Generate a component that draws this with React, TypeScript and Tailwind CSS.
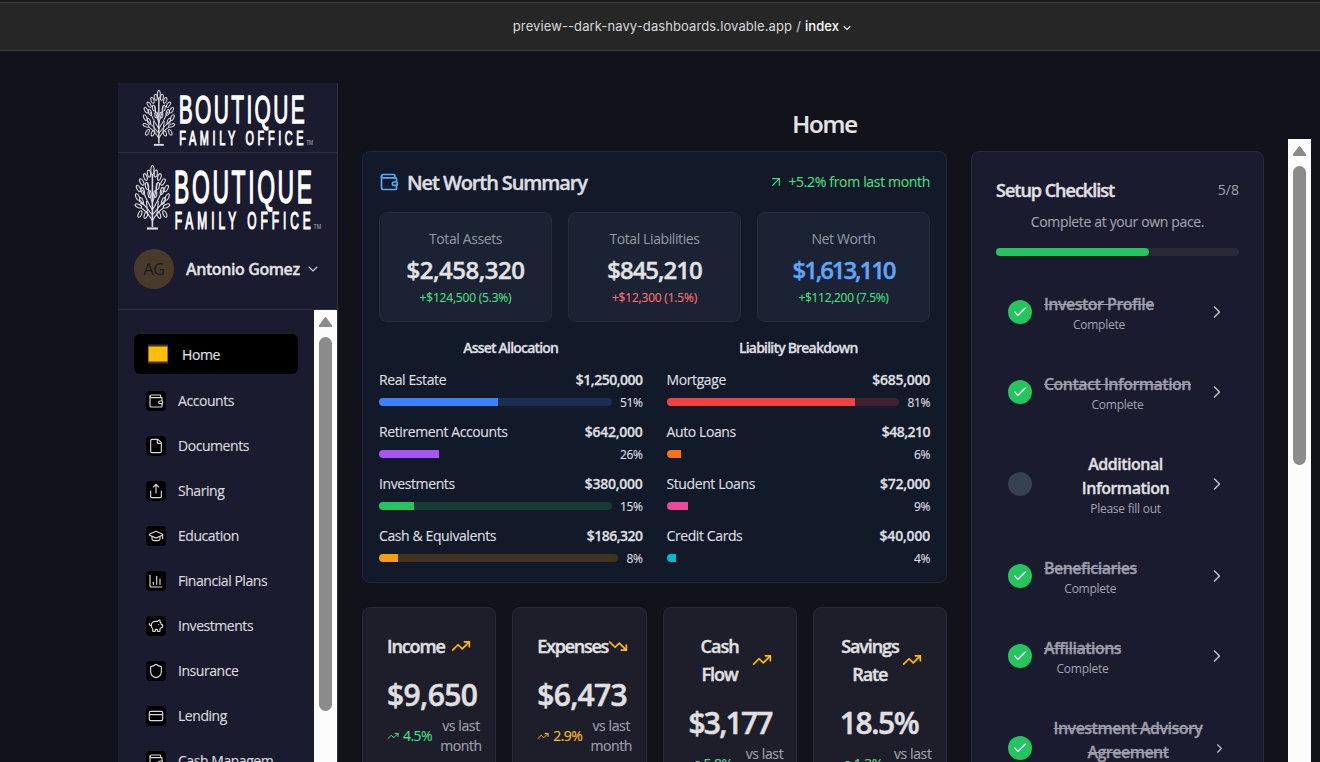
import React from "react";
import {
  Wallet, ArrowUpRight, TrendingUp, TrendingDown, ChevronRight, ChevronDown, Check,
  File, Share, GraduationCap, ChartColumn, PiggyBank, Shield, CreditCard,
} from "lucide-react";

const branches = [
  "M18 56 Q14 48 7 43",
  "M18 50 Q13 43 5 35",
  "M18 45 Q13 37 8 25",
  "M18 38 Q15 30 13 18",
  "M13 46 L12 36",
];
const leaves: [number, number, number][] = [
  [5.5, 49, 25], [11.5, 50, 20], [3.9, 41, -65], [3.1, 32, -25], [7, 36, -20],
  [4.1, 23.5, -30], [8.3, 26, -15], [7.3, 17, -30], [11, 12, -18], [12.6, 21, -10],
  [14.6, 8.5, -8], [15.2, 29, -5],
];

function HalfTree() {
  return (
    <g>
      {branches.map((d) => <path key={d} d={d} />)}
      {leaves.map(([x, y, r]) => (
        <ellipse key={`${x}-${y}`} cx={x} cy={y} rx="1.6" ry="3.5" transform={`rotate(${r} ${x} ${y})`} />
      ))}
    </g>
  );
}

function Logo({ className }: { className: string }) {
  return (
    <svg viewBox="0 0 188 66" preserveAspectRatio="none" overflow="visible" className={className}>
      <g fill="none" stroke="#dadae0" strokeWidth="1.1">
        <g transform="translate(0.5 0)">
          <HalfTree />
          <g transform="translate(36 0) scale(-1 1)"><HalfTree /></g>
          <ellipse cx="18" cy="5" rx="1.6" ry="4.5" />
          <path d="M18 62V9" strokeWidth="1.6" />
          <path d="M12.5 63.5h11" strokeWidth="2.2" />
        </g>
      </g>
      <g fill="#fff" stroke="#fff" fontFamily="Liberation Sans, sans-serif">
        <text transform="translate(40.3 37.7) scale(0.5 1)" fontSize="46" letterSpacing="5.3" strokeWidth="1.5">BOUTIQUE</text>
        <text transform="translate(40.9 63.6) scale(0.5 1)" fontSize="24" letterSpacing="8" strokeWidth="1.2">FAMILY OFFICE</text>
        <text transform="translate(180.5 63.6) scale(0.65 1)" fontSize="8" stroke="none" opacity="0.65">TM</text>
      </g>
    </svg>
  );
}

function ScrollBar({ thumb }: { thumb: string }) {
  return (
    <div className="flex w-[23px] shrink-0 flex-col items-center bg-[#fcfcfc] pt-[6px]">
      <svg viewBox="0 0 15 12" className="h-3 w-[15px] shrink-0">
        <path d="M7.5 2 L13.3 10 H1.7 Z" fill="#8b8b8b" stroke="#8b8b8b" strokeWidth="2" strokeLinejoin="round" />
      </svg>
      <div className={`mt-[9px] w-[13px] shrink-0 rounded-full bg-[#8b8b8b] ${thumb}`} />
    </div>
  );
}

const nav = [
  { label: "Accounts", Icon: Wallet },
  { label: "Documents", Icon: File },
  { label: "Sharing", Icon: Share },
  { label: "Education", Icon: GraduationCap },
  { label: "Financial Plans", Icon: ChartColumn },
  { label: "Investments", Icon: PiggyBank },
  { label: "Insurance", Icon: Shield },
  { label: "Lending", Icon: CreditCard },
  { label: "Cash Managem", Icon: Wallet },
];

function Sidebar() {
  return (
    <aside className="flex w-[220px] shrink-0 flex-col border-r border-[#2e2e42] bg-[#1b1b2f]">
      <div className="h-[70px] shrink-0 border-b border-[#2e2e42] pl-6 pt-[7px]">
        <Logo className="h-[57px] w-[171px]" />
      </div>
      <div className="h-[157px] shrink-0 border-b border-[#2e2e42] pl-4 pt-3">
        <Logo className="h-[66px] w-[187px]" />
        <div className="mt-[18px] flex items-center">
          <div className="flex size-10 items-center justify-center rounded-full bg-[#493b29] text-base font-medium tracking-[-0.3px] text-[#1c1c1f]">AG</div>
          <span className="ml-3 w-[115px] whitespace-nowrap text-base font-semibold tracking-[-0.4px] text-[#e2e2e4] [-webkit-text-stroke:0.3px]">Antonio Gomez</span>
          <ChevronDown className="ml-1 size-4 text-[#cfcfd4]" strokeWidth={1.6} />
        </div>
      </div>
      <div className="flex min-h-0 flex-1">
        <nav className="flex-1 overflow-hidden pl-4 pr-4 pt-6">
          <div className="flex h-10 items-center rounded-md bg-black pl-[14px] text-sm text-[#e0e0e2] [-webkit-text-stroke:0.15px]">
            <svg viewBox="0 0 20 20" className="size-5">
              <rect width="20" height="20" fill="#1d1d2d" />
              <rect y="1.5" width="20" height="17" fill="#6b5210" />
              <rect x="0.7" y="2.7" width="18.6" height="14.6" fill="#ffbf00" />
              <circle cx="6.5" cy="10" r="2" fill="#f3b81e" />
            </svg>
            <span className="ml-[14px] pt-0.5 tracking-[-0.4px]">Home</span>
          </div>
          <div className="mt-[7px] flex flex-col gap-[5px]">
            {nav.map(({ label, Icon }) => (
              <div key={label} className="flex h-10 shrink-0 items-center pl-3 text-sm text-[#dadadd] [-webkit-text-stroke:0.15px]">
                <span className="flex size-5 shrink-0 items-center justify-center rounded-sm bg-black">
                  <Icon className="size-4" strokeWidth={1.7} />
                </span>
                <span className="ml-3 whitespace-nowrap tracking-[-0.45px]">{label}</span>
              </div>
            ))}
          </div>
        </nav>
        <ScrollBar thumb="h-[374px]" />
      </div>
    </aside>
  );
}

const stats = [
  { label: "Total Assets", value: "$2,458,320", delta: "+$124,500 (5.3%)", c: "tracking-[-0.5px] text-[#e2e2e4]", d: "tracking-[-0.2px] text-[#4ade80]" },
  { label: "Total Liabilities", value: "$845,210", delta: "+$12,300 (1.5%)", c: "tracking-[-1px] text-[#e2e2e4]", d: "tracking-[-0.2px] text-[#f87171]" },
  { label: "Net Worth", value: "$1,613,110", delta: "+$112,200 (7.5%)", c: "tracking-[-2.1px] text-[#60a5fa]", d: "tracking-[-0.3px] text-[#4ade80]" },
];

const assets = [
  { label: "Real Estate", value: "$1,250,000", pct: 51, fill: "bg-[#3b82f6]", track: "bg-[#1a2d52]", t: "tracking-[-0.5px]" },
  { label: "Retirement Accounts", value: "$642,000", pct: 26, fill: "bg-[#a855f7]", track: "", t: "tracking-[-0.25px]" },
  { label: "Investments", value: "$380,000", pct: 15, fill: "bg-[#22c55e]", track: "bg-[#163b33]", t: "tracking-[-0.25px]" },
  { label: "Cash & Equivalents", value: "$186,320", pct: 8, fill: "bg-[#f59e0b]", track: "bg-[#403322]", t: "tracking-[-0.5px]" },
];
const debts = [
  { label: "Mortgage", value: "$685,000", pct: 81, fill: "bg-[#ef4444]", track: "bg-[#3e222f]", t: "tracking-[-0.25px]" },
  { label: "Auto Loans", value: "$48,210", pct: 6, fill: "bg-[#f97316]", track: "", t: "tracking-[-0.5px]" },
  { label: "Student Loans", value: "$72,000", pct: 9, fill: "bg-[#ec4899]", track: "", t: "tracking-[-0.25px]" },
  { label: "Credit Cards", value: "$40,000", pct: 4, fill: "bg-[#06b6d4]", track: "", t: "tracking-[-0.2px]" },
];

function Breakdown({ title, rows }: { title: string; rows: typeof assets }) {
  return (
    <div>
      <h3 className="mb-3 text-center text-sm font-semibold tracking-[-0.8px] [-webkit-text-stroke:0.3px]">{title}</h3>
      <div className="flex flex-col gap-3">
        {rows.map((r) => (
          <div key={r.label}>
            <div className="flex justify-between text-sm">
              <span className="tracking-[-0.4px] [-webkit-text-stroke:0.15px]">{r.label}</span>
              <span className={`font-semibold [-webkit-text-stroke:0.3px] ${r.t}`}>{r.value}</span>
            </div>
            <div className="mt-1 flex h-4 items-center">
              <div className={`h-2 flex-1 overflow-hidden rounded-full ${r.track}`}>
                <div className={`h-full ${r.fill}`} style={{ width: `${r.pct}%` }} />
              </div>
              <span className={`ml-2 pt-px text-right text-xs tracking-[-0.4px] [-webkit-text-stroke:0.15px] ${r.pct < 10 ? "w-[17px]" : "w-[23px]"}`}>{r.pct}%</span>
            </div>
          </div>
        ))}
      </div>
    </div>
  );
}

function NetWorth() {
  return (
    <section className="rounded-lg border border-[#1e2939] bg-[#121928] p-4 text-[#dedee0]">
      <div className="flex h-7 items-center justify-between">
        <div className="flex items-center">
          <Wallet className="size-5 text-[#60a5fa]" strokeWidth={2} />
          <h2 className="ml-2 whitespace-nowrap pt-0.5 text-xl font-semibold tracking-[-1.1px] [-webkit-text-stroke:0.4px]">Net Worth Summary</h2>
        </div>
        <div className="flex items-center text-sm text-[#4ade80]">
          <ArrowUpRight className="mr-1 size-4" strokeWidth={1.8} />
          <span className="whitespace-nowrap tracking-[-0.33px] [-webkit-text-stroke:0.15px]">+5.2% from last month</span>
        </div>
      </div>
      <div className="mt-4 grid grid-cols-3 gap-4">
        {stats.map((s) => (
          <div key={s.label} className="h-[110px] rounded-lg border border-[#222c3b] bg-[#1a2233] p-4 text-center">
            <div className="text-sm tracking-[-0.4px] text-[#959aa5]">{s.label}</div>
            <div className={`mt-[5px] text-2xl font-semibold [-webkit-text-stroke:0.4px] ${s.c}`}>{s.value}</div>
            <div className={`mt-1 whitespace-nowrap text-xs [-webkit-text-stroke:0.15px] ${s.d}`}>{s.delta}</div>
          </div>
        ))}
      </div>
      <div className="mt-4 grid grid-cols-2 gap-6">
        <Breakdown title="Asset Allocation" rows={assets} />
        <Breakdown title="Liability Breakdown" rows={debts} />
      </div>
    </section>
  );
}

const metrics = [
  { title: ["Income"], value: "$9,650", pct: "4.5%", down: false, c: "text-[#4ade80]", h: "tracking-[-1.1px]", v: "tracking-[-0.6px]", w: "w-[31px]" },
  { title: ["Expenses"], value: "$6,473", pct: "2.9%", down: true, c: "text-[#fbbf24]", h: "tracking-[-1.25px]", v: "tracking-[-0.7px]", w: "w-[31px]" },
  { title: ["Cash", "Flow"], value: "$3,177", pct: "5.8%", down: false, c: "text-[#4ade80]", h: "tracking-[-1px]", v: "pl-px tracking-[-1.8px]", w: "w-[34px]" },
  { title: ["Savings", "Rate"], value: "18.5%", pct: "1.2%", down: false, c: "text-[#4ade80]", h: "tracking-[-1.1px]", v: "pl-[2px] tracking-[-1.4px]", w: "w-[32px]" },
];

function Metrics() {
  return (
    <div className="mt-6 grid grid-cols-4 gap-4">
      {metrics.map((m) => {
        const Trend = m.down ? TrendingDown : TrendingUp;
        return (
          <section key={m.value} className="h-[220px] rounded-lg border border-[#292938] bg-[#1e1e2b] px-6 pt-6 text-[#e0e0e2]">
            <div className="flex items-center">
              <h3 className={`text-center text-lg/7 font-semibold [-webkit-text-stroke:0.4px] ${m.h} ${m.title.length > 1 ? "flex-1" : ""}`}>
                {m.title.map((w) => <div key={w}>{w}</div>)}
              </h3>
              <Trend className={`size-5 shrink-0 text-[#ffbf00] ${m.title[0] === "Income" ? "ml-[6px]" : ""}`} strokeWidth={2} />
            </div>
            <div className={`mt-[17px] whitespace-nowrap text-3xl/9 font-semibold [-webkit-text-stroke:0.5px] ${m.v}`}>{m.value}</div>
            <div className="mt-[3px] flex items-center text-sm [-webkit-text-stroke:0.15px]">
              <TrendingUp className={`size-3 shrink-0 ${m.c}`} />
              <span className={`ml-1 shrink-0 tracking-[-0.6px] ${m.w} ${m.c}`}>{m.pct}</span>
              <span className="ml-[6px] w-[42px] shrink-0 text-center leading-5 tracking-[-0.4px] text-[#a0a0ab]">vs last month</span>
            </div>
          </section>
        );
      })}
    </div>
  );
}

const steps = [
  { title: "Investor Profile", done: true },
  { title: "Contact Information", done: true },
  { title: "Additional Information", done: false },
  { title: "Beneficiaries", done: true },
  { title: "Affiliations", done: true },
  { title: "Investment Advisory Agreement", done: true, small: true },
];

function Checklist() {
  return (
    <section className="h-[700px] w-[293px] shrink-0 rounded-lg border border-[#2a2a3d] bg-[#1b1b2f] p-6 text-[#e0e0e2]">
      <div className="flex h-7 items-center justify-between">
        <h2 className="text-lg font-semibold tracking-[-1px] [-webkit-text-stroke:0.4px]">Setup Checklist</h2>
        <span className="text-sm text-[#a3a3b0]">5/8</span>
      </div>
      <p className="mt-2 text-center text-sm tracking-[-0.35px] text-[#a3a3b0] [-webkit-text-stroke:0.1px]">Complete at your own pace.</p>
      <div className="mt-4 h-2 rounded-full bg-[#29293a]">
        <div className="h-full w-[63%] rounded-full bg-[#22c55e]" />
      </div>
      <div className="mt-6 flex flex-col gap-4">
        {steps.map((s) => (
          <div key={s.title} className="flex items-center p-3">
            <span className={`flex size-6 shrink-0 items-center justify-center rounded-full ${s.done ? "bg-[#22c55e]" : "bg-[#374151]"}`}>
              {s.done && <Check className="size-4 text-white" strokeWidth={2} />}
            </span>
            <div className={`-mb-px ml-3 text-center ${s.done && !s.small ? "mr-auto" : "flex-1"} ${s.done ? "" : "px-4"}`}>
              <div className={`text-base/6 font-semibold [-webkit-text-stroke:0.3px] ${s.done ? "tracking-[-0.52px] text-[#9d9dab] line-through" : "tracking-[-0.5px]"}`}>{s.title}</div>
              <div className="pt-px text-xs tracking-[-0.25px] text-[#a3a3b0]">{s.done ? "Complete" : "Please fill out"}</div>
            </div>
            <ChevronRight className={`shrink-0 text-[#c0c0ca] ${s.small ? "size-[15px]" : "size-5"}`} strokeWidth={1.8} />
          </div>
        ))}
      </div>
    </section>
  );
}

export default function App() {
  return (
    <div className="flex h-[762px] w-[1320px] flex-col overflow-hidden bg-[#12121b] font-['Open_Sans','Noto_Sans',sans-serif]">
      <header className="flex h-[51px] shrink-0 flex-col bg-[#1b1b1c]">
        <div className="mt-[2px] flex flex-1 items-center justify-center border-y border-[#3e3e41] bg-[#262627] pl-[46px] pt-px font-[Inter,sans-serif] text-[13px] tracking-[0.1px] text-[#d8d8da]">
          <span>preview--dark-navy-dashboards.lovable.app</span>
          <span className="mx-1">/</span>
          <span className="font-medium text-white">index</span>
          <ChevronDown className="ml-[2px] mt-[2px] size-3 text-[#e0e0e0]" strokeWidth={2.4} />
        </div>
      </header>
      <div className="flex min-h-0 flex-1 pl-[118px] pr-[9px] pt-8">
        <Sidebar />
        <main className="flex min-w-0 flex-1 flex-col">
          <h1 className="h-14 shrink-0 pt-[25px] text-center text-2xl font-semibold tracking-[-1.2px] text-[#e4e4e6] [-webkit-text-stroke:0.2px]">Home</h1>
          <div className="flex min-h-0 flex-1">
            <div className="flex min-w-0 flex-1 gap-6 overflow-hidden pl-6 pr-6 pt-3">
              <div className="w-[585px] shrink-0">
                <NetWorth />
                <Metrics />
              </div>
              <Checklist />
            </div>
            <ScrollBar thumb="h-[299px]" />
          </div>
        </main>
      </div>
    </div>
  );
}
